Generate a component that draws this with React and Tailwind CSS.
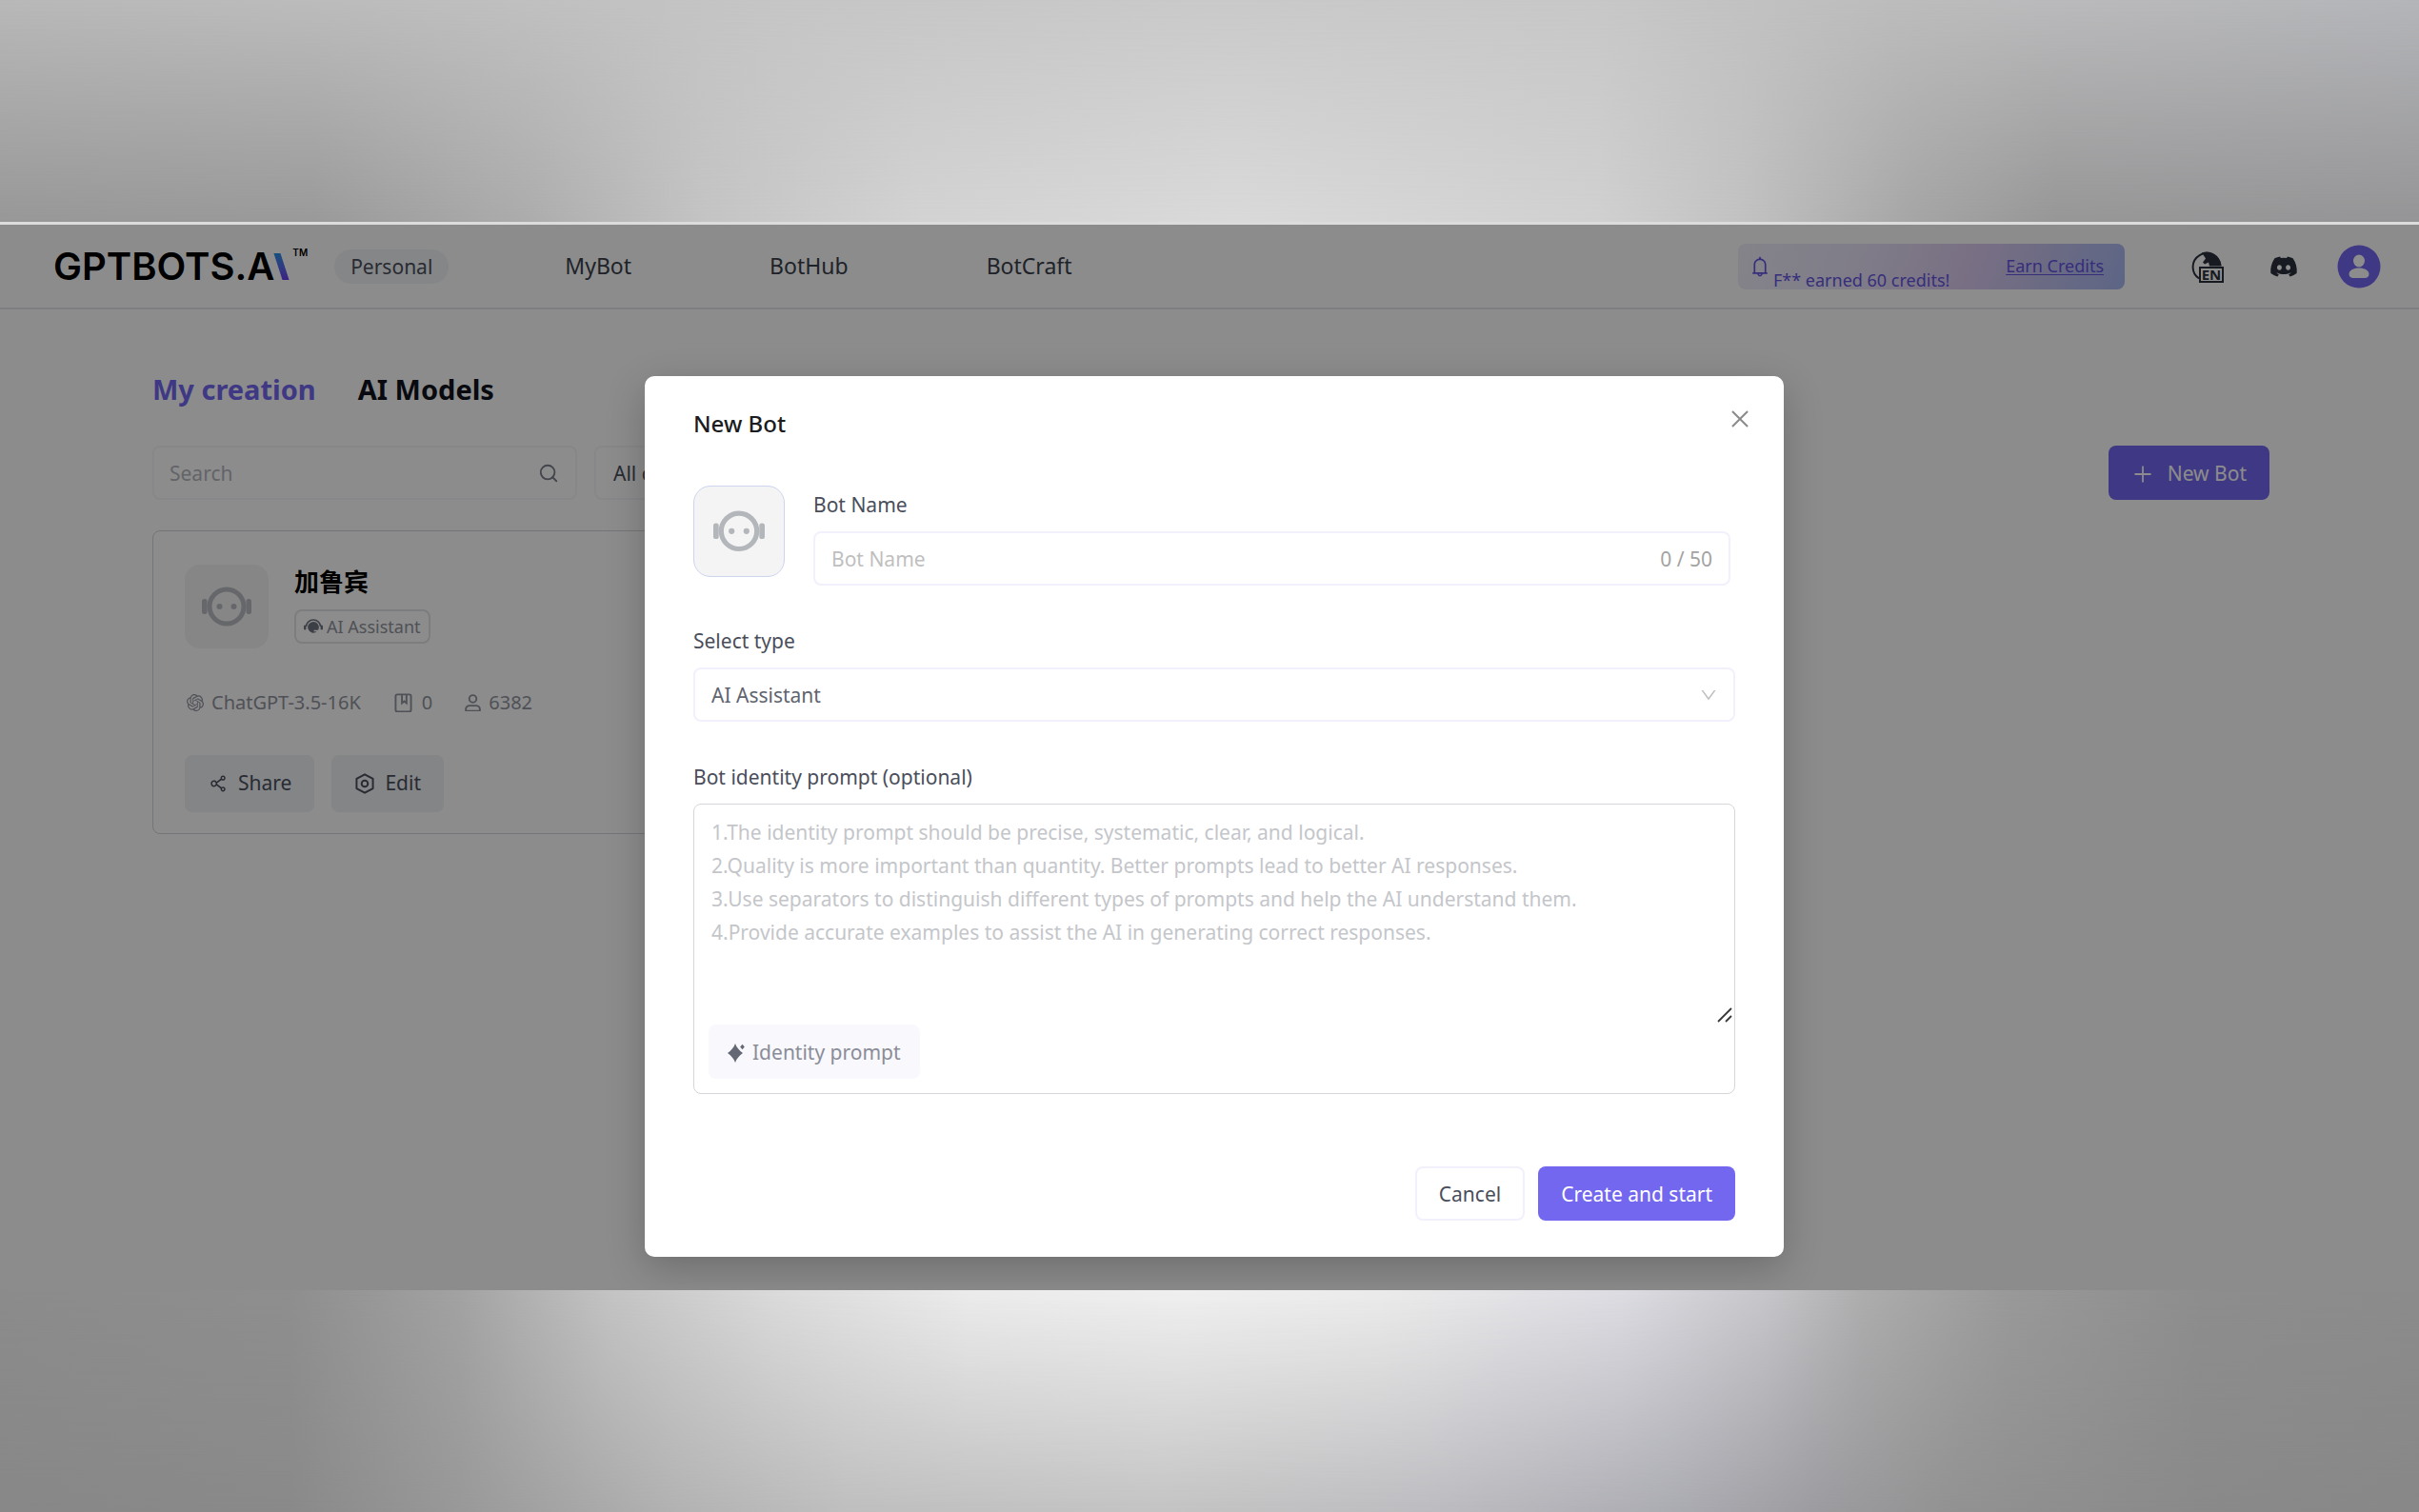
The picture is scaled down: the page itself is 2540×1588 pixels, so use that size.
import { useState } from 'react';
import { Search } from 'lucide-react';
import {
  AiOutlineBell,
  AiOutlineClose,
  AiOutlineDown,
  AiOutlinePlus,
  AiOutlineShareAlt,
} from 'react-icons/ai';
import { FaDiscord } from 'react-icons/fa';
import { SiOpenai } from 'react-icons/si';

const NAV_LINKS = ['MyBot', 'BotHub', 'BotCraft'];

const PROMPT_HINT = [
  '1.The identity prompt should be precise, systematic, clear, and logical.',
  '2.Quality is more important than quantity. Better prompts lead to better AI responses.',
  '3.Use separators to distinguish different types of prompts and help the AI understand them.',
  '4.Provide accurate examples to assist the AI in generating correct responses.',
].join('\n');

function BotFace({ className }) {
  return (
    <svg viewBox="0 0 52 42" className={className} fill="currentColor" aria-hidden="true">
      <circle cx="26" cy="21" r="18" fill="none" stroke="currentColor" strokeWidth="5" />
      <circle cx="18.5" cy="21" r="3" />
      <circle cx="33.5" cy="21" r="3" />
      <rect x="0" y="13" width="5.5" height="16" rx="2.5" />
      <rect x="46.5" y="13" width="5.5" height="16" rx="2.5" />
    </svg>
  );
}

function HeadsetIcon({ className }) {
  return (
    <svg viewBox="0 0 20 16" className={className} fill="currentColor" aria-hidden="true">
      <path d="M2.5 8a7.5 7 0 0 1 15 0" fill="none" stroke="currentColor" strokeWidth="1.6" />
      <rect x="0" y="6.5" width="2.4" height="5" rx="1.2" />
      <rect x="17.6" y="6.5" width="2.4" height="5" rx="1.2" />
      <path d="M10 3a5.8 5.8 0 1 0 3.8 10.2h-3.2v-1.4h4.4A5.8 5.8 0 0 0 10 3Z" />
    </svg>
  );
}

function BookIcon({ className }) {
  return (
    <svg viewBox="0 0 20 22" className={className} fill="none" stroke="currentColor" strokeWidth="2" aria-hidden="true">
      <rect x="1.5" y="1.5" width="17" height="19" rx="2" />
      <path d="M8.5 2v9l2.5-2 2.5 2V2" />
    </svg>
  );
}

function UserIcon({ className }) {
  return (
    <svg viewBox="0 0 18 20" className={className} fill="none" stroke="currentColor" strokeWidth="2" aria-hidden="true">
      <circle cx="9" cy="5.2" r="4" />
      <path d="M1.2 18.8v-2a4 4 0 0 1 4-4h7.6a4 4 0 0 1 4 4v2Z" strokeLinejoin="round" />
    </svg>
  );
}

function HexIcon({ className }) {
  return (
    <svg viewBox="0 0 20 20" className={className} fill="none" stroke="currentColor" strokeWidth="1.8" strokeLinejoin="round" aria-hidden="true">
      <path d="M10 1.2 17.8 5.4v9.2L10 18.8 2.2 14.6V5.4Z" />
      <circle cx="10" cy="10" r="3" />
    </svg>
  );
}

function SparkleIcon({ className }) {
  return (
    <svg viewBox="0 0 18 20" className={className} fill="currentColor" aria-hidden="true">
      <path d="M8 0c1.300 4 4.500 7.500 8 10-3.500 2.500-6.700 6-8 10C6.700 16 3.500 12.500 0 10 3.500 7.500 6.700 4 8 0Z" />
      <path d="M15.500 0.800 17.800 3.500 15.500 6.200 13.200 3.500Z" />
    </svg>
  );
}

function LanguageIcon() {
  return (
    <span className="relative block h-[34px] w-[34px] text-[#2b303c]">
      <svg viewBox="0 0 34 34" className="h-full w-full" fill="none" aria-hidden="true">
        <path d="M8 29.500A14.500 14.500 0 1 1 30.500 16" stroke="currentColor" strokeWidth="2" />
        <path d="M11 2.500C19-1 30 4 31.500 16.500H19l-1-4-4 2-2-2 3-4Z" fill="currentColor" />
      </svg>
      <span className="absolute right-0 bottom-0 flex h-[17px] w-[26px] items-center justify-center border-2 border-[#2b303c] bg-white text-[15px] leading-none font-bold">
        EN
      </span>
    </span>
  );
}

function AvatarIcon() {
  return (
    <svg viewBox="0 0 46 46" className="h-[46px] w-[46px]" aria-hidden="true">
      <circle cx="23" cy="23" r="22.500" fill="#7367f0" />
      <ellipse cx="23" cy="17" rx="6" ry="6.500" fill="#fff" />
      <path d="M12.500 31c0-4 4.500-6.500 10.500-6.500S33.500 27 33.500 31c0 2.500-2 4-4.500 4H17c-2.500 0-4.500-1.500-4.500-4Z" fill="#fff" />
    </svg>
  );
}

function Header() {
  return (
    <header className="flex h-[89px] items-center border-b-2 border-[#e6e6ea] pr-10 pl-14">
      <a href="#home" className="flex items-center text-black" aria-label="GPTBots.AI home">
        <span className="font-[Inter] text-[40px] leading-none font-semibold">GPTBOTS.A</span>
        <span className="ml-1 h-7 w-[7px] skew-x-[18deg] bg-linear-to-b from-[#1e8fe8] to-[#6a3df0]" />
        <span className="ml-2 self-start font-[Inter] text-[10px] leading-none font-semibold">TM</span>
      </a>
      <span className="ml-7 rounded-full bg-[#f2f4f7] px-[17px] py-0.5 text-[21px] leading-8 text-[#4a4f5c]">Personal</span>
      <nav className="ml-[122px] flex gap-[145px] text-[23px] text-[#3a3f4b]">
        {NAV_LINKS.map((link) => (
          <a key={link} href={`#${link}`}>{link}</a>
        ))}
      </nav>
      <div className="ml-auto flex h-12 w-[406px] items-center rounded-lg bg-[linear-gradient(110deg,#f0effa_0%,#e9e4f8_30%,#dccbf0_60%,#a9b9f2_100%)] pr-[22px] pl-[11px] text-[18px] text-[#6355e0]">
        <AiOutlineBell className="h-6 w-6" />
        <span className="ml-0.5 self-end leading-5">F** earned 60 credits!</span>
        <a href="#credits" className="ml-auto underline underline-offset-2">Earn Credits</a>
      </div>
      <div className="ml-[70px] flex items-center">
        <button type="button" aria-label="Language"><LanguageIcon /></button>
        <button type="button" aria-label="Discord" className="ml-12">
          <FaDiscord className="h-[30px] w-[30px] text-[#2b303c]" />
        </button>
        <button type="button" aria-label="Account" className="ml-[41px]"><AvatarIcon /></button>
      </div>
    </header>
  );
}

function BotCard() {
  return (
    <article className="rounded-lg border border-[#d4d5da] px-[33px] pt-[35px] pb-[22px]">
      <div className="flex">
        <div className="flex h-[88px] w-[88px] items-center justify-center rounded-2xl bg-[#f4f4f4] text-[#b9bcc3]">
          <BotFace className="w-[52px]" />
        </div>
        <div className="ml-[27px]">
          <h2 className="text-[26px] leading-9 font-bold text-black">加鲁宾</h2>
          <span className="mt-[11px] flex h-9 items-center gap-1 rounded-lg border-2 border-[#e2e3e8] px-2 text-[18px] leading-7 text-[#90949e]">
            <HeadsetIcon className="w-5 text-[#6f7480]" />
            AI Assistant
          </span>
        </div>
      </div>
      <div className="mt-[42px] flex h-[30px] items-center text-[20px] text-[#90949e]">
        <SiOpenai className="ml-0.5 h-[18px] w-[18px]" />
        <span className="ml-2">ChatGPT-3.5-16K</span>
        <BookIcon className="ml-[35px] w-[19px]" />
        <span className="ml-2.5">0</span>
        <UserIcon className="ml-[34px] w-[17px]" />
        <span className="ml-2">6382</span>
      </div>
      <div className="mt-10 flex gap-[18px] text-[21px] text-[#4a4f5c]">
        <button type="button" className="flex h-[60px] items-center gap-2.5 rounded-lg bg-[#f0f2f6] px-6">
          <AiOutlineShareAlt className="h-[22px] w-[22px]" />
          Share
        </button>
        <button type="button" className="flex h-[60px] items-center gap-2.5 rounded-lg bg-[#f0f2f6] px-6">
          <HexIcon className="h-[22px] w-[22px]" />
          Edit
        </button>
      </div>
    </article>
  );
}

function Workspace() {
  return (
    <section className="pr-[157px] pl-40">
      <div className="flex gap-11 pt-[61px] text-[29px] leading-[46px] font-bold">
        <a href="#creation" className="text-[#7367f0]">My creation</a>
        <a href="#models" className="text-[#10131c]">AI Models</a>
      </div>
      <div className="mt-9 flex text-[21px]">
        <label className="flex h-[57px] w-[446px] items-center rounded-lg border-2 border-[#f6f6fa] pr-[17px] pl-4">
          <input type="text" placeholder="Search" aria-label="Search" className="w-full pt-0.5 outline-none placeholder:text-[#b4b7be]" />
          <Search className="h-[22px] w-[22px] shrink-0 text-[#7b7f8a]" strokeWidth={2} />
        </label>
        <select aria-label="Category" className="ml-[18px] h-[57px] w-[220px] appearance-none rounded-lg border-2 border-[#f6f6fa] pt-0.5 pl-[18px] text-[#4a4f5c]">
          <option>All categories</option>
        </select>
        <button type="button" className="ml-auto flex h-[57px] items-center gap-[14px] rounded-lg bg-[#7367f0] px-6 pt-0.5 text-white">
          <AiOutlinePlus className="h-6 w-6" />
          New Bot
        </button>
      </div>
      <div className="mt-8 grid grid-cols-3 gap-6">
        <BotCard />
      </div>
    </section>
  );
}

function NewBotDialog() {
  const [name, setName] = useState('');

  return (
    <div
      role="dialog"
      aria-labelledby="dialog-title"
      className="w-[1196px] rounded-[10px] bg-white px-[51px] pb-[38px] text-[21px] text-[#4a4e5a] shadow-[0_12px_40px_rgba(0,0,0,0.22)]"
    >
      <div className="flex items-start justify-between pt-8">
        <h1 id="dialog-title" className="text-[24px] leading-9 font-medium text-[#1b1c22]">New Bot</h1>
        <button type="button" aria-label="Close" className="-mr-[18px] text-[#8c8c8c]">
          <AiOutlineClose className="h-[26px] w-[26px]" />
        </button>
      </div>

      <div className="mt-[47px] flex pr-[5px]">
        <div className="flex h-24 w-24 shrink-0 items-center justify-center rounded-[18px] border border-[#ccd4ee] bg-[#f4f4f4] text-[#b3b6ba]">
          <BotFace className="w-[54px]" />
        </div>
        <div className="ml-[30px] flex-1">
          <label htmlFor="bot-name" className="mt-1 block leading-8">Bot Name</label>
          <div className="mt-3 flex h-[57px] items-center rounded-lg border-2 border-[#f1f0fc] px-[17px] pt-0.5">
            <input
              id="bot-name"
              type="text"
              maxLength={50}
              value={name}
              onChange={(e) => setName(e.target.value)}
              placeholder="Bot Name"
              className="flex-1 outline-none placeholder:text-[#bfbfbf]"
            />
            <span className="text-[#a3a3a3]">{name.length} / 50</span>
          </div>
        </div>
      </div>

      <label htmlFor="bot-type" className="mt-[42px] block leading-8">Select type</label>
      <div className="relative mt-3">
        <select id="bot-type" className="h-[57px] w-full appearance-none rounded-lg border-2 border-[#f1f0fc] px-[17px] pt-0.5 text-[#60646e]">
          <option>AI Assistant</option>
        </select>
        <AiOutlineDown className="pointer-events-none absolute top-[19px] right-[18px] h-5 w-5 text-[#bfbfbf]" />
      </div>

      <label htmlFor="bot-prompt" className="mt-[42px] block leading-8">Bot identity prompt (optional)</label>
      <div className="mt-3 rounded-lg border border-[#d6d6da] pb-[15px]">
        <div className="relative">
          <textarea
            id="bot-prompt"
            placeholder={PROMPT_HINT}
            className="block h-[231px] w-full resize-none px-[18px] pt-3 leading-[35px] outline-none placeholder:text-[#c4c6ca]"
          />
          <svg viewBox="0 0 16 16" className="pointer-events-none absolute right-0.5 bottom-0.5 h-4 w-4" stroke="#3a3a3a" strokeWidth="1.800" aria-hidden="true">
            <path d="M1 15 15 1M9 15 15 9" />
          </svg>
        </div>
        <button type="button" className="ml-[15px] flex h-[57px] items-center gap-2 rounded-lg bg-[#f8f8fd] px-5 pt-0.5 text-[#8a8d97]">
          <SparkleIcon className="w-[18px] text-[#646874]" />
          Identity prompt
        </button>
      </div>

      <div className="mt-[76px] flex justify-end gap-[14px]">
        <button type="button" className="h-[57px] rounded-lg border-2 border-[#f1f0fc] px-[23px] pt-0.5">Cancel</button>
        <button type="button" className="h-[57px] rounded-lg bg-[#7367f0] px-6 pt-0.5 text-white">Create and start</button>
      </div>
    </div>
  );
}

export default function App() {
  return (
    <div className="flex min-h-screen flex-col bg-white font-['Noto_Sans','Noto_Sans_CJK_SC',sans-serif]">
      <div className="h-[233px] bg-[linear-gradient(to_right,#989898_0%,#9a9a9a_13%,#adadad_22%,#c4c4c4_29%,#d3d3d3_38%,#dadada_51%,#d1d1d1_66%,#c2c2c2_72%,#a6a6a6_79%,#979798_85%,#959597_100%)]">
        <div className="h-full bg-[linear-gradient(to_right,#b8b8b8_0%,#bcbcbc_15%,#c5c5c5_32%,#c9c9c9_50%,#c7c7c7_66%,#bcbcbd_78%,#b4b5b8_100%)] mask-[linear-gradient(to_bottom,black,transparent)]" />
      </div>
      <div className="h-[3px] bg-[#dcdcdc]" />

      <div className="relative flex-1 overflow-hidden">
        <Header />
        <Workspace />
        <div className="absolute inset-0 flex items-start justify-center bg-black/45 pt-[159px] pl-[10px]">
          <NewBotDialog />
        </div>
      </div>

      <div className="h-[233px] bg-[linear-gradient(to_right,#888_0%,#8a8a8a_12%,#999_19%,#b3b3b3_28%,#bfbfbf_35%,#c4c4c4_48%,#bdbdc1_59%,#acacb3_69%,#9d9da1_75%,#929292_81%,#8a8a8a_91%,#888_100%)]">
        <div className="h-full bg-[linear-gradient(to_right,#8b8b8b_0%,#8e8e8e_12%,#a2a2a2_19%,#c2c2c2_25%,#dadada_32%,#ebebeb_40%,#efefef_49%,#ebebeb_57%,#dcdce2_67%,#c6c6ca_73%,#adadae_77%,#999_83%,#8d8d8d_91%,#8b8b8b_100%)] mask-[linear-gradient(to_bottom,black,transparent)]" />
      </div>
    </div>
  );
}
